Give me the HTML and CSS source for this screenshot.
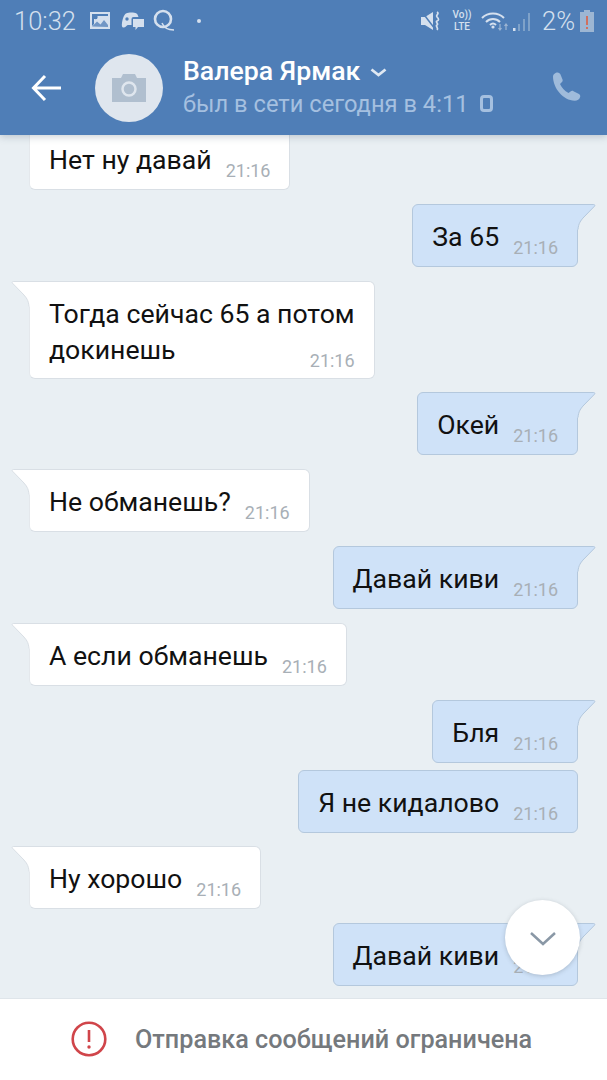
FILE: index.html
```html
<!DOCTYPE html>
<html lang="ru">
<head>
<meta charset="utf-8">
<title>Чат</title>
<link rel="stylesheet" href="styles.css">
</head>
<body>
<svg class="defs" width="0" height="0" aria-hidden="true">
  <symbol id="tail-in" viewBox="0 0 20 26"><path d="M18 25.500C17.500 19 15 16.500 13 14L1.500 2.200C.9 1.400 1.200.5 2.200.5H20V25.500Z" fill="#fff"/><path d="M18 25.500C17.500 19 15 16.500 13 14L1.500 2.200C.9 1.400 1.200.5 2.200.5H20" fill="none" stroke="#d9dfe5"/></symbol>
  <symbol id="tail-out" viewBox="0 0 20 26"><path d="M2 25.500C2.500 19 5 16.500 7 14L18.500 2.200C19.100 1.400 18.800.5 17.800.5H0V25.500Z" fill="#cfe2f8"/><path d="M2 25.500C2.500 19 5 16.500 7 14L18.500 2.200C19.100 1.400 18.800.5 17.800.5H0" fill="none" stroke="#b4c8dd"/></symbol>
</svg>
<div class="screen">
  <header class="top">
    <div class="status">
      <div class="status-left">
        <span class="clock">10:32</span>
        <svg class="ic" width="22" height="20" viewBox="0 0 22 20"><path fill="#d5e0ee" d="M1 1h20v17H1z"/><path fill="#4f7eb7" d="M3 3h16v2H8v3H5v5l-2 2z"/><circle cx="6.500" cy="6" r="2.200" fill="#4f7eb7"/><path fill="#4f7eb7" d="M3 15.500l5-5 3.500 3 3.500-4.500 4 5v2z" opacity=".75"/></svg>
        <svg class="ic game" width="24" height="20" viewBox="0 0 24 20"><path fill="#d5e0ee" d="M5 2.500c3-1.200 8-1.200 10.500 0 .9.400 1.500 2 2 3.500h-5a2 2 0 0 0-2 2v6H7c-1 0-2 2-4 2.500C1 17 .5 15 1 12c.4-3.500 2-8.500 4-9.500z"/><circle cx="6" cy="8" r="1.700" fill="#4f7eb7"/><path fill="#d5e0ee" d="M12 8h11v8h-6l-2.500 3v-3H12z"/></svg>
        <svg class="ic" width="22" height="24" viewBox="0 0 22 24"><circle cx="10" cy="10" r="8" fill="none" stroke="#d5e0ee" stroke-width="2.600"/><path d="M9 14c2 5 6 7 12 7" fill="none" stroke="#d5e0ee" stroke-width="1.500"/></svg>
        <span class="dot"></span>
      </div>
      <div class="status-right">
        <svg class="ic" width="22" height="22" viewBox="0 0 22 22"><path fill="#d5e0ee" d="M0 7h4l8-5v18l-8-5H0z"/><path d="M1 2l13 17" stroke="#4f7eb7" stroke-width="1.500"/><path d="M16 2c3 2-2 3 0 5s2 3 0 4 2 3 0 4 2 3 0 5" fill="none" stroke="#d5e0ee" stroke-width="1.700"/></svg>
        <span class="volte"><span>Vo))</span><span>LTE</span></span>
        <svg class="ic wifi" width="28" height="20" viewBox="0 0 28 20"><g fill="none" stroke="#d5e0ee" stroke-width="2"><path d="M1 7c6-6 16-6 22 0"/><path d="M5 11c4-4 10-4 14 0"/><path d="M9 14c2-2 4-2 6 0"/></g><circle cx="12" cy="16" r="1.600" fill="#d5e0ee"/><path d="M19 13v6M17.500 17l1.500 2 1.500-2M25 19v-6M23.500 15l1.500-2 1.500 2" fill="none" stroke="#9db6d3" stroke-width="1.200"/></svg>
        <svg class="ic signal" width="19" height="22" viewBox="0 0 19 22"><rect x="1" y="18" width="2.500" height="3" fill="#d5e0ee"/><rect x="6" y="14" width="2" height="7" fill="#7fa2c9"/><rect x="11" y="9" width="2" height="12" fill="#7fa2c9"/><rect x="16" y="3" width="2" height="18" fill="#7fa2c9"/></svg>
        <span class="pct">2%</span>
        <svg class="ic" width="14" height="22" viewBox="0 0 14 22"><path fill="#9db6d3" d="M4 0h6v2h4v20H0V2h4z"/><rect x="6" y="6" width="2" height="9" fill="#d0705f"/><rect x="6" y="17" width="2" height="2" fill="#d0705f"/></svg>
      </div>
    </div>
    <div class="bar">
      <svg class="back" width="32" height="28" viewBox="0 0 32 28"><path d="M30 14H3M14 2L2.500 14 14 26" fill="none" stroke="#fff" stroke-width="3"/></svg>
      <div class="avatar">
        <svg width="36" height="30" viewBox="0 0 36 30"><path fill="#b0bfcf" d="M1 5h9l2-4h12l2 4h9v24H1z"/><circle cx="18" cy="16" r="6.500" fill="none" stroke="#dfe6ee" stroke-width="2.500"/></svg>
      </div>
      <div class="who">
        <div class="name">Валера Ярмак
          <svg class="chev" width="17" height="10" viewBox="0 0 17 10"><path d="M1.500 1.500l7 5.500 7-5.500" fill="none" stroke="#dfe8f2" stroke-width="2.800"/></svg>
        </div>
        <div class="seen">был в сети сегодня в 4:11
          <svg class="phone-dev" width="13" height="17" viewBox="0 0 13 17"><rect x="1.500" y="1.500" width="10" height="14" rx="2.500" fill="none" stroke="#a5c0e0" stroke-width="3"/></svg>
        </div>
      </div>
      <svg class="call" width="30" height="30" viewBox="0 0 30 30"><path fill="#9fbbdb" d="M1 4.500C1 2.500 3.500.5 5.500.5c1.500 0 2.500 1 3 2l2 5c.5 1.200 0 2.200-1 3l-1.500 1.500c1.500 3.500 4.500 7 8.500 9l2-1.500c1-.8 2-.8 3-.3l5 2.500c1.200.6 2 1.500 1.700 3-.5 2.500-3 4-5.500 4C11 28.500 1 16 1 4.500z"/></svg>
    </div>
  </header>

  <main class="chat">
    <div class="msg in first"><span class="txt">Нет ну давай</span><span class="time">21:16</span></div>
    <div class="msg out"><svg class="tail"><use href="#tail-out"/></svg><span class="txt">За 65</span><span class="time">21:16</span></div>
    <div class="msg in wide"><svg class="tail"><use href="#tail-in"/></svg><div class="txt">Тогда сейчас 65 а потом</div><div class="lastline"><span class="txt">докинешь</span><span class="time">21:16</span></div></div>
    <div class="msg out"><svg class="tail"><use href="#tail-out"/></svg><span class="txt">Окей</span><span class="time">21:16</span></div>
    <div class="msg in"><svg class="tail"><use href="#tail-in"/></svg><span class="txt">Не обманешь?</span><span class="time">21:16</span></div>
    <div class="msg out"><svg class="tail"><use href="#tail-out"/></svg><span class="txt">Давай киви</span><span class="time">21:16</span></div>
    <div class="msg in"><svg class="tail"><use href="#tail-in"/></svg><span class="txt">А если обманешь</span><span class="time">21:16</span></div>
    <div class="msg out"><svg class="tail"><use href="#tail-out"/></svg><span class="txt">Бля</span><span class="time">21:16</span></div>
    <div class="msg out cont"><span class="txt">Я не кидалово</span><span class="time">21:16</span></div>
    <div class="msg in"><svg class="tail"><use href="#tail-in"/></svg><span class="txt">Ну хорошо</span><span class="time">21:16</span></div>
    <div class="msg out"><svg class="tail"><use href="#tail-out"/></svg><span class="txt">Давай киви</span><span class="time">21:16</span></div>
    <button class="down" aria-label="Вниз"><svg width="28" height="16" viewBox="0 0 28 16"><path d="M2 2l12 11L26 2" fill="none" stroke="#8a98a6" stroke-width="2.500"/></svg></button>
  </main>

  <footer class="limit">
    <svg width="36" height="36" viewBox="0 0 36 36"><circle cx="18" cy="18" r="16.300" fill="none" stroke="#d0454a" stroke-width="2.600"/><path d="M18 9v12" stroke="#d0454a" stroke-width="2.600"/><circle cx="18" cy="26" r="1.700" fill="#d0454a"/></svg>
    <span>Отправка сообщений ограничена</span>
  </footer>
</div>
</body>
</html>
```
FILE: styles.css
```css
* { box-sizing: border-box; }
html, body { margin: 0; padding: 0; }
body { width: 607px; height: 1080px; overflow: hidden; font-family: Roboto, "Noto Sans", sans-serif; background: #e9eff3; }
.defs { position: absolute; }
.screen { width: 607px; height: 1080px; display: flex; flex-direction: column; }

.top { height: 135px; flex: none; background: #4f7eb7; position: relative; z-index: 2; box-shadow: 0 2px 7px rgba(60, 80, 100, .25); }
.status { height: 42px; display: flex; justify-content: space-between; align-items: center; padding: 0 13px 0 14px; color: #d5e0ee; }
.status-left, .status-right { display: flex; align-items: center; }
.clock { font-size: 25.500px; font-weight: 300; width: 75px; }
.status-left .ic { margin-right: 10px; }
.status-left .game { margin-right: 8px; }
.dot { width: 4px; height: 4px; border-radius: 50%; background: #d5e0ee; margin-left: 12px; }
.status-right { gap: 8px; }
.volte { display: flex; flex-direction: column; font-size: 10px; line-height: 12px; font-weight: 500; width: 22px; align-items: center; }
.signal { margin-left: -5px; }
.pct { font-size: 25.500px; font-weight: 300; margin: 0 -3px 0 3px; }

.bar { height: 93px; display: flex; align-items: center; padding: 0 25px 0 31px; }
.back { flex: none; margin-top: -1px; }
.avatar { width: 68px; height: 68px; border-radius: 50%; background: #dfe6ee; margin: -2px 0 0 32px; display: flex; align-items: center; justify-content: center; flex: none; }
.who { margin-left: 20px; flex: 1; }
.name { font-size: 26.700px; line-height: 30px; font-weight: 500; color: #fff; display: flex; align-items: center; gap: 10px; margin-top: -3px; }
.chev { margin-top: 5px; }
.seen { font-size: 23.700px; line-height: 30px; color: #a5c0e0; display: flex; align-items: center; gap: 11px; margin-top: 3px; }
.call { flex: none; margin-top: -4px; }

.chat { flex: 1; min-height: 0; position: relative; overflow: hidden; padding: 0 29px; display: flex; flex-direction: column; align-items: flex-start; }
.msg { position: relative; height: 63px; margin-top: 13.800px; display: flex; align-items: flex-start; padding: 14px 19px 0 19px; background: #fff; border: 1px solid #d9dfe5; border-radius: 6px; font-size: 26.650px; line-height: 36px; color: #111; flex: none; }
.msg.in { border-top-left-radius: 0; border-left-color: #e4e8ec; }
.msg.out { align-self: flex-end; background: #cfe2f8; border-color: #b4c8dd; border-top-right-radius: 0; }
.msg.first { margin-top: -8px; border-top-left-radius: 6px; }
.msg.cont { margin-top: 7px; border-top-right-radius: 6px; }
.msg.wide { height: 98px; display: block; }
.lastline { display: flex; justify-content: space-between; }
.time { font-size: 18px; line-height: 20px; color: #a8afb6; margin: 19px 0 0 14px; }
.lastline .time { margin-top: 19px; }
.tail { position: absolute; top: -1px; width: 20px; height: 26px; }
.in .tail { left: -19px; }
.out .tail { right: -19px; }

.down { position: absolute; left: 505px; top: 765px; width: 75px; height: 75px; padding: 3px 0 0; border: 0; border-radius: 50%; background: #fff; box-shadow: 0 1px 4px rgba(60, 70, 85, .25); display: flex; align-items: center; justify-content: center; }

.limit { height: 82px; flex: none; background: #fff; border-top: 1px solid #dfe5ea; display: flex; align-items: center; gap: 28px; padding: 0 0 1px 71px; position: relative; z-index: 1; }
.limit span { font-size: 25.200px; font-weight: 500; color: #75797d; }
```
